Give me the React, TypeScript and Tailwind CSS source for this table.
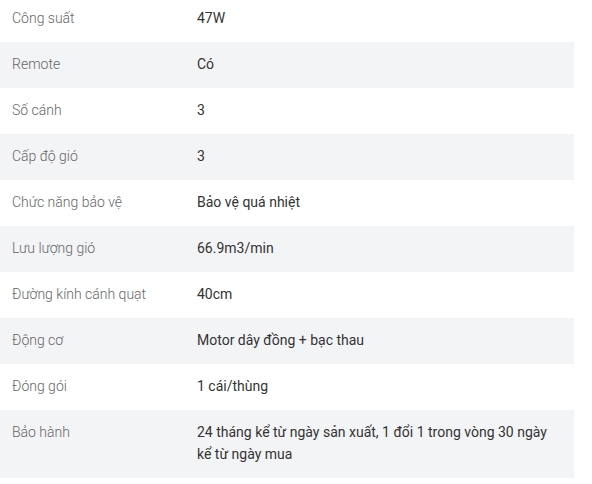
import React from "react";

type Spec = {
  label: string;
  value: string;
};

const specs: Spec[] = [
  { label: "Công suất", value: "47W" },
  { label: "Remote", value: "Có" },
  { label: "Số cánh", value: "3" },
  { label: "Cấp độ gió", value: "3" },
  { label: "Chức năng bảo vệ", value: "Bảo vệ quá nhiệt" },
  { label: "Lưu lượng gió", value: "66.9m3/min" },
  { label: "Đường kính cánh quạt", value: "40cm" },
  { label: "Động cơ", value: "Motor dây đồng + bạc thau" },
  { label: "Đóng gói", value: "1 cái/thùng" },
  { label: "Bảo hành", value: "24 tháng kể từ ngày sản xuất, 1 đổi 1 trong vòng 30 ngày kể từ ngày mua" },
];

const App = () => {
  return (
    <div className="min-h-screen bg-white" style={{ fontFamily: "Roboto, 'Liberation Sans', sans-serif" }}>
      <table className="w-[574px] -mt-1 border-collapse text-[14px] leading-[22px]">
        <tbody>
          {specs.map((spec, i) => (
            <tr key={spec.label} className={i % 2 === 1 ? "bg-[#f3f4f6]" : "bg-white"}>
              <td className="w-[185px] px-3 pt-[11px] pb-[13px] align-top font-light text-[#666666]">{spec.label}</td>
              <td className="px-3 pt-[11px] pb-[13px] align-top text-[#333333]">{spec.value}</td>
            </tr>
          ))}
        </tbody>
      </table>
    </div>
  );
};

export default App;
